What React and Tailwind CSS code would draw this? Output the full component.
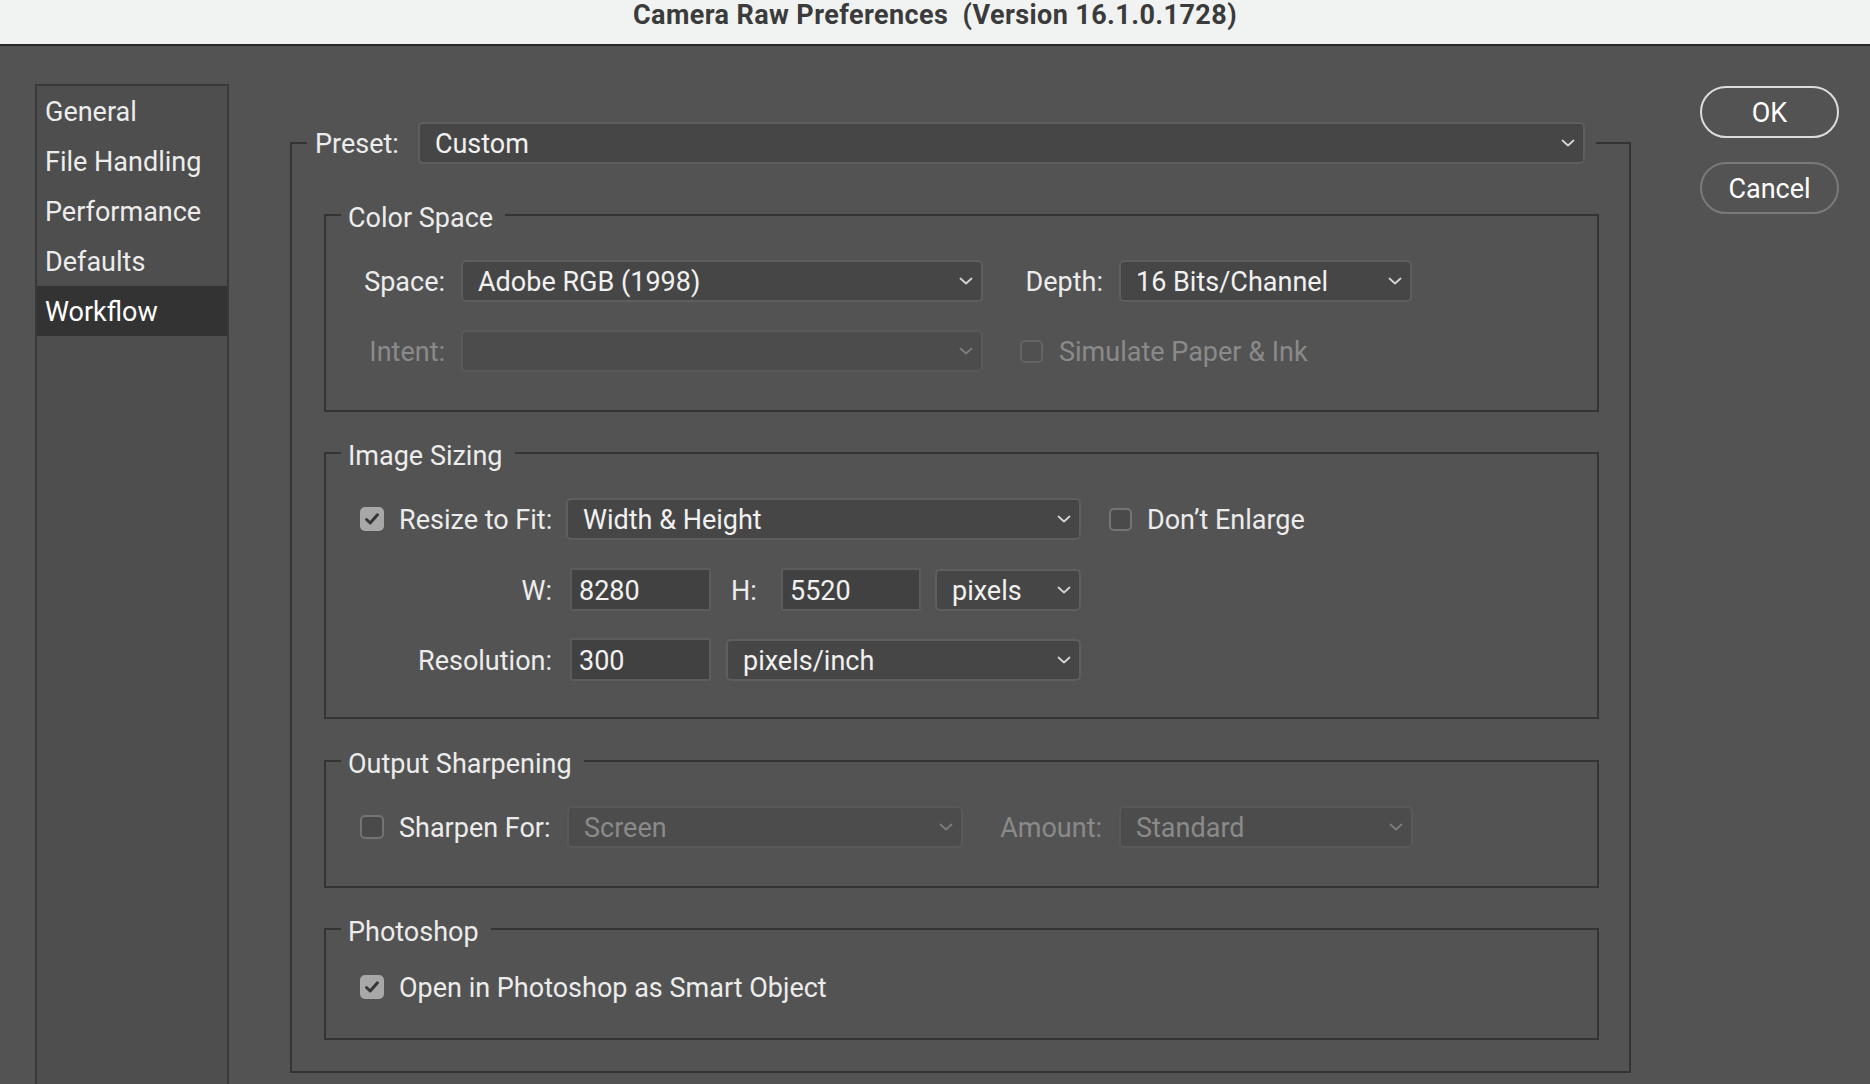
import React from "react";

function Chevron({ disabled }) {
  return (
    <svg width="14" height="8" viewBox="0 0 14 8" className="shrink-0">
      <polyline
        points="1.5,1.5 7,6.5 12.5,1.5"
        fill="none"
        stroke={disabled ? "#7c7c7c" : "#d4d4d4"}
        strokeWidth="1.8"
        strokeLinecap="round"
        strokeLinejoin="round"
      />
    </svg>
  );
}

function Select({ value, className = "", disabled, h = "h-[42px]" }) {
  return (
    <div
      className={`${className} ${h} flex items-center justify-between rounded-[5px] border-2 pl-[15px] pr-[8px] ${
        disabled
          ? "bg-[#4c4c4c] border-[#595959] text-[#8a8a8a]"
          : "bg-[#464646] border-[#5e5e5e] text-[#f1f1f1]"
      }`}
    >
      <span className="pt-[2px]">{value}</span>
      <Chevron disabled={disabled} />
    </div>
  );
}

function Input({ value, className = "" }) {
  return (
    <div
      className={`${className} h-[43px] flex items-center bg-[#414141] border-2 border-[#5c5c5c] rounded-[2px] pl-[7px] pt-[2px] text-[#f1f1f1]`}
    >
      {value}
    </div>
  );
}

function Checkbox({ checked, disabled, size = "w-[24px] h-[24px]" }) {
  if (checked) {
    return (
      <div
        className={`${size} shrink-0 rounded-[5px] bg-[#a8a8a8] flex items-center justify-center`}
      >
        <svg width="16" height="14" viewBox="0 0 16 14">
          <polyline
            points="2.5,7.5 6.2,11 13.5,2.8"
            fill="none"
            stroke="#363636"
            strokeWidth="3"
            strokeLinecap="round"
            strokeLinejoin="round"
          />
        </svg>
      </div>
    );
  }
  return (
    <div
      className={`${size} shrink-0 rounded-[5px] border-2 ${
        disabled ? "border-[#646464] bg-[#505050]" : "border-[#747474] bg-[#4a4a4a]"
      }`}
    />
  );
}

function Group({ title, className = "", children }) {
  return (
    <fieldset className={`${className} border-2 border-[#343434]`}>
      <legend className="ml-[15px] pl-[7px] pr-[12px] pt-[6px] leading-[32px] text-[#ececec]">
        {title}
      </legend>
      {children}
    </fieldset>
  );
}

const navItems = ["General", "File Handling", "Performance", "Defaults", "Workflow"];

export default function App() {
  return (
    <div className="w-[1870px] h-[1084px] overflow-hidden bg-[#535353] font-[Roboto,sans-serif] text-[27px] leading-[32px] text-[#ececec]">
      {/* title bar */}
      <div className="h-[46px] bg-[#f1f3f2] border-b-2 border-[#2a2a2a] flex justify-center">
        <div className="whitespace-pre font-bold text-[27px] tracking-[0.4px] leading-[30px] text-[#3b3b3b]">
          Camera Raw Preferences  (Version 16.1.0.1728)
        </div>
      </div>

      <div className="flex items-start pt-[38px]">
        {/* sidebar */}
        <div className="ml-[35px] w-[194px] h-[1100px] shrink-0 border-2 border-[#393939] bg-[#4e4e4e]">
          {navItems.map((item) => (
            <div
              key={item}
              className={`h-[50px] flex items-center pl-[8px] pt-[2px] ${
                item === "Workflow" ? "bg-[#333333] text-white" : ""
              }`}
            >
              {item}
            </div>
          ))}
        </div>

        {/* main panel */}
        <fieldset className="ml-[61px] mt-[38px] w-[1341px] shrink-0 border-2 border-[#343434]">
          <legend className="ml-[15px] w-[1289px] pl-[8px] pr-[11px]">
            <div className="flex items-center">
              <span className="pt-[2px]">Preset:</span>
              <Select value="Custom" className="ml-[19px] flex-1" />
            </div>
          </legend>

          <div className="pl-[32px] pr-[30px] pt-[32px] pb-[31px]">
            <Group title="Color Space">
              <div className="pt-[26px] pb-[38px] flex flex-col gap-[28px]">
                <div className="flex items-center">
                  <div className="w-[119px] text-right pt-[2px]">Space:</div>
                  <Select value="Adobe RGB (1998)" className="ml-[16px] w-[522px]" />
                  <div className="w-[120px] text-right pt-[2px]">Depth:</div>
                  <Select value="16 Bits/Channel" className="ml-[16px] w-[293px]" />
                </div>
                <div className="flex items-center">
                  <div className="w-[119px] text-right pt-[2px] text-[#8a8a8a]">Intent:</div>
                  <Select value="" disabled className="ml-[16px] w-[522px]" />
                  <div className="ml-[37px]">
                    <Checkbox disabled size="w-[23px] h-[23px]" />
                  </div>
                  <span className="ml-[16px] pt-[2px] text-[#8a8a8a]">Simulate Paper &amp; Ink</span>
                </div>
              </div>
            </Group>

            <Group title="Image Sizing" className="mt-[22px]">
              <div className="pt-[26px] pb-[36px] flex flex-col">
                <div className="flex items-center">
                  <div className="w-[226px] flex items-center pl-[34px]">
                    <Checkbox checked />
                    <span className="ml-[15px] pt-[2px] whitespace-nowrap">Resize to Fit:</span>
                  </div>
                  <Select value="Width & Height" className="ml-[14px] w-[515px]" />
                  <div className="ml-[28px]">
                    <Checkbox size="w-[23px] h-[23px]" />
                  </div>
                  <span className="ml-[15px] pt-[2px]">Don’t Enlarge</span>
                </div>
                <div className="flex items-center mt-[28px]">
                  <div className="w-[226px] text-right pt-[2px]">W:</div>
                  <Input value="8280" className="ml-[18px] w-[141px]" />
                  <div className="w-[70px] pl-[20px] pt-[2px]">H:</div>
                  <Input value="5520" className="w-[140px]" />
                  <Select value="pixels" className="ml-[14px] w-[146px]" />
                </div>
                <div className="flex items-center mt-[27px]">
                  <div className="w-[226px] text-right pt-[2px]">Resolution:</div>
                  <Input value="300" className="ml-[18px] w-[141px]" />
                  <Select value="pixels/inch" className="ml-[15px] w-[355px]" />
                </div>
              </div>
            </Group>

            <Group title="Output Sharpening" className="mt-[23px]">
              <div className="pt-[26px] pb-[38px]">
                <div className="flex items-center">
                  <div className="w-[226px] flex items-center pl-[34px]">
                    <Checkbox />
                    <span className="ml-[15px] pt-[2px] whitespace-nowrap">Sharpen For:</span>
                  </div>
                  <Select value="Screen" disabled className="ml-[15px] w-[396px]" />
                  <div className="w-[139px] text-right pt-[2px] text-[#8a8a8a]">Amount:</div>
                  <Select value="Standard" disabled className="ml-[17px] w-[294px]" />
                </div>
              </div>
            </Group>

            <Group title="Photoshop" className="mt-[22px]">
              <div className="pt-[18px] pb-[30px]">
                <div className="h-[42px] flex items-center pl-[34px]">
                  <Checkbox checked />
                  <span className="ml-[15px] pt-[2px]">Open in Photoshop as Smart Object</span>
                </div>
              </div>
            </Group>
          </div>
        </fieldset>

        {/* buttons */}
        <div className="ml-[69px] mt-[2px] flex flex-col gap-[24px]">
          <button className="w-[139px] h-[52px] rounded-full border-2 border-[#dcdcdc] pt-[2px] text-white">
            OK
          </button>
          <button className="w-[139px] h-[52px] rounded-full border-2 border-[#7a7a7a] pt-[2px] text-white">
            Cancel
          </button>
        </div>
      </div>
    </div>
  );
}
